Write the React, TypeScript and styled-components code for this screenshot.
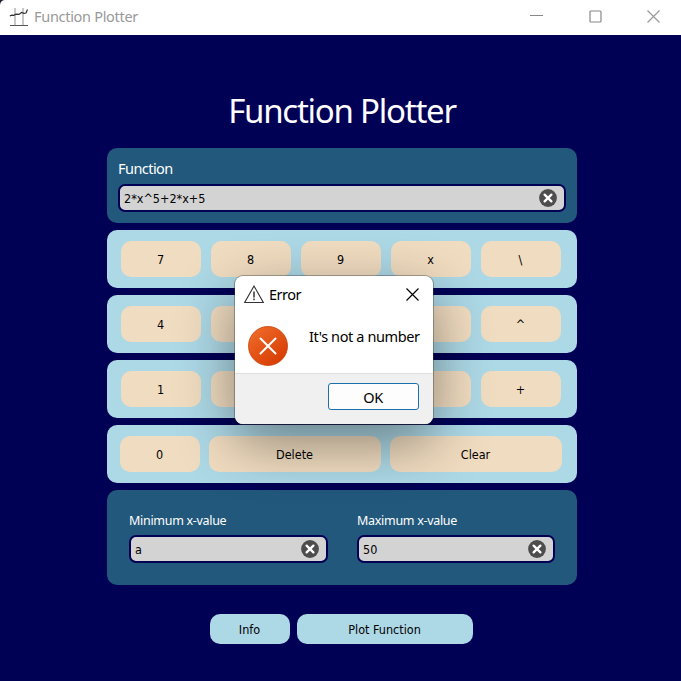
import React from "react";
import styled, { createGlobalStyle } from "styled-components";

const GlobalStyle = createGlobalStyle`
  * { box-sizing: border-box; }
  body { margin: 0; background: #222; overflow: hidden; }
  button { border: 0; padding: 0; margin: 0; font: inherit; color: inherit; letter-spacing: inherit; }
`;

const Window = styled.div`
  position: relative;
  width: 681px;
  height: 681px;
  display: flex;
  flex-direction: column;
  background: #000055;
  border-top-left-radius: 5px;
  overflow: hidden;
  font-family: "DejaVu Sans Condensed", "DejaVu Sans", sans-serif;
  font-stretch: condensed;
  font-size: 12.5px;
  color: #000;
`;

const TitleBar = styled.header`
  height: 35px;
  flex: none;
  display: flex;
  align-items: center;
  padding: 0 9px 2px;
  background: #fff;
  color: #999;
`;

const WindowTitle = styled.span`
  flex: 1;
  margin-left: 5px;
  padding-bottom: 2px;
  font: 14.5px/20px "Noto Sans", sans-serif;
  letter-spacing: -0.3px;
`;

const WindowControls = styled.div`
  display: flex;
  gap: 45.5px;
  margin-right: 12px;
  svg { display: block; }
`;

const Content = styled.main`
  width: 470px;
  margin-left: 107px;
  display: flex;
  flex-direction: column;
  gap: 7px;
`;

const Heading = styled.h1`
  margin: 51px 0 0;
  height: 55px;
  text-align: center;
  font: 400 33px/50px "Noto Sans", sans-serif;
  letter-spacing: -1.25px;
  color: #fff;
`;

const Panel = styled.section<{ $height: number; $pad: string; $gap?: number }>`
  height: ${(p) => p.$height}px;
  padding: ${(p) => p.$pad};
  display: flex;
  gap: ${(p) => p.$gap ?? 0}px;
  border-radius: 10px;
  background: #22587c;
`;

const Field = styled.label<{ $width: number }>`
  width: ${(p) => p.$width}px;
  display: flex;
  flex-direction: column;
`;

const FieldLabel = styled.span<{ $large?: boolean }>`
  height: ${(p) => (p.$large ? 25 : 24)}px;
  line-height: ${(p) => (p.$large ? 18 : 20)}px;
  font-family: "Noto Sans", sans-serif;
  font-size: ${(p) => (p.$large ? 14.5 : 12.5)}px;
  letter-spacing: ${(p) => (p.$large ? -0.55 : -0.3)}px;
  color: #fff;
`;

const InputBox = styled.span`
  height: 28px;
  display: flex;
  align-items: center;
  justify-content: space-between;
  padding: 0 7px 0 4px;
  border: 2px solid #000055;
  border-radius: 7px;
  background: #d3d3d3;
  svg { display: block; }
`;

const InputValue = styled.span`
  padding-top: 1px;
`;

const KeyRow = styled.div<{ $pad: number; $gap: number }>`
  height: 58px;
  padding: 11px ${(p) => p.$pad}px;
  display: flex;
  gap: ${(p) => p.$gap}px;
  border-radius: 10px;
  background: #add8e6;
`;

const Key = styled.button<{ $width?: number }>`
  width: ${(p) => p.$width ?? 80}px;
  height: 36px;
  padding-right: 1px;
  border-radius: 10px;
  background: #f0dcc0;
`;

const Actions = styled.footer`
  display: flex;
  gap: 7px;
  margin: 22px 0 0 103px;
`;

const ActionButton = styled.button<{ $width: number }>`
  width: ${(p) => p.$width}px;
  height: 30px;
  padding-right: 1px;
  border-radius: 10px;
  background: #add8e6;
`;

const Dialog = styled.div`
  position: absolute;
  left: 235px;
  top: 276px;
  width: 198px;
  height: 148px;
  display: flex;
  flex-direction: column;
  border-radius: 8px;
  overflow: hidden;
  background: #fff;
  font: 14.5px/20px "Noto Sans", sans-serif;
  box-shadow: 0 0 0 1px rgba(60, 60, 60, 0.4), 0 18px 56px rgba(0, 0, 0, 0.42);
`;

const DialogHeader = styled.div`
  height: 37px;
  display: flex;
  align-items: center;
  padding: 0 14px 0 9px;
  svg { display: block; flex: none; }
`;

const DialogTitle = styled.span`
  flex: 1;
  margin-left: 5px;
  padding-bottom: 2px;
  letter-spacing: -0.5px;
`;

const DialogBody = styled.div`
  height: 60px;
  display: flex;
  padding: 13px 0 0 13px;
  svg { display: block; flex: none; }
`;

const Message = styled.span`
  margin-left: 21px;
  white-space: nowrap;
  letter-spacing: -0.38px;
`;

const DialogFooter = styled.div`
  flex: 1;
  display: flex;
  justify-content: flex-end;
  align-items: flex-start;
  padding: 9px 14px 0 0;
  border-top: 1px solid #dfdfdf;
  background: #f0f0f0;
`;

const OkButton = styled.button`
  width: 91px;
  height: 27px;
  padding-right: 1px;
  border: 1px solid #1970ad;
  border-radius: 3px;
  background: #fdfdfd;
  letter-spacing: -0.5px;
`;

const PlotIcon = () => (
  <svg width="20" height="20" viewBox="0 0 20 20" fill="none">
    <path d="M6 1v17M14 1v17" stroke="#aaa" strokeWidth="1.3" />
    <path d="M1 18.5h18" stroke="#555" strokeWidth="1.2" />
    <path d="m.8 8.8 2.2-.6 2 .1 2-1.2 3 .3 2.5-1.9 2.5.9L17 6l1.5-3.5" stroke="#333" strokeWidth="1.2" />
  </svg>
);

const ClearIcon = () => (
  <svg width="18" height="18" viewBox="0 0 18 18">
    <circle cx="9" cy="9" r="8.9" fill="#4d4d4d" />
    <path d="m5.6 5.6 6.8 6.8m0-6.8-6.8 6.8" stroke="#fff" strokeWidth="2.3" strokeLinecap="round" />
  </svg>
);

const WarningIcon = () => (
  <svg width="20" height="19" viewBox="0 0 20 19" fill="none" stroke="#333">
    <path d="M10 1 19.3 17.5H.7Z" strokeWidth="1.1" />
    <path d="M10 6.5v6M10 13.5v1.7" strokeWidth="1.5" />
  </svg>
);

const ErrorIcon = () => (
  <svg width="40" height="40" viewBox="0 0 40 40">
    <defs>
      <linearGradient id="errorFill" x1="0" y1="0" x2="0.8" y2="1">
        <stop offset="0" stopColor="#f0702c" />
        <stop offset="1" stopColor="#d73a02" />
      </linearGradient>
    </defs>
    <circle cx="20" cy="20" r="19.5" fill="url(#errorFill)" stroke="#c9430d" strokeWidth=".8" />
    <path d="m12.5 12.5 15 15m0-15-15 15" stroke="#fff" strokeWidth="2" strokeLinecap="round" />
  </svg>
);

const CrossIcon = () => (
  <svg width="13" height="13" viewBox="0 0 13 13" stroke="currentColor">
    <path d="m.5.5 12 12m0-12-12 12" strokeWidth="1.2" />
  </svg>
);

const keyRows = [
  ["7", "8", "9", "x", "\\"],
  ["4", "5", "6", "*", "^"],
  ["1", "2", "3", "-", "+"],
];

function TextField({ label, value, width, large }: { label: string; value: string; width: number; large?: boolean }) {
  return (
    <Field $width={width}>
      <FieldLabel $large={large}>{label}</FieldLabel>
      <InputBox>
        <InputValue>{value}</InputValue>
        <ClearIcon />
      </InputBox>
    </Field>
  );
}

export default function App() {
  return (
    <>
      <GlobalStyle />
      <Window>
        <TitleBar>
          <PlotIcon />
          <WindowTitle>Function Plotter</WindowTitle>
          <WindowControls>
            <svg width="13" height="13" stroke="#888"><path d="M0 5.5h13" /></svg>
            <svg width="13" height="13" stroke="#888" fill="none"><rect x="1" y="1" width="11" height="11" rx="1" strokeWidth="1.2" /></svg>
            <CrossIcon />
          </WindowControls>
        </TitleBar>
        <Content>
          <Heading>Function Plotter</Heading>
          <Panel $height={75} $pad="11px">
            <TextField label="Function" value="2*x^5+2*x+5" width={448} large />
          </Panel>
          {keyRows.map((keys) => (
            <KeyRow key={keys[0]} $pad={14} $gap={10}>
              {keys.map((label) => <Key key={label}>{label}</Key>)}
            </KeyRow>
          ))}
          <KeyRow $pad={13} $gap={9}>
            <Key>0</Key>
            <Key $width={172}>Delete</Key>
            <Key $width={172}>Clear</Key>
          </KeyRow>
          <Panel $height={95} $pad="21px 22px" $gap={29}>
            <TextField label="Minimum x-value" value="a" width={199} />
            <TextField label="Maximum x-value" value="50" width={198} />
          </Panel>
          <Actions>
            <ActionButton $width={80}>Info</ActionButton>
            <ActionButton $width={176}>Plot Function</ActionButton>
          </Actions>
        </Content>
        <Dialog role="dialog">
          <DialogHeader>
            <WarningIcon />
            <DialogTitle>Error</DialogTitle>
            <CrossIcon />
          </DialogHeader>
          <DialogBody>
            <ErrorIcon />
            <Message>It's not a number</Message>
          </DialogBody>
          <DialogFooter>
            <OkButton>OK</OkButton>
          </DialogFooter>
        </Dialog>
      </Window>
    </>
  );
}
